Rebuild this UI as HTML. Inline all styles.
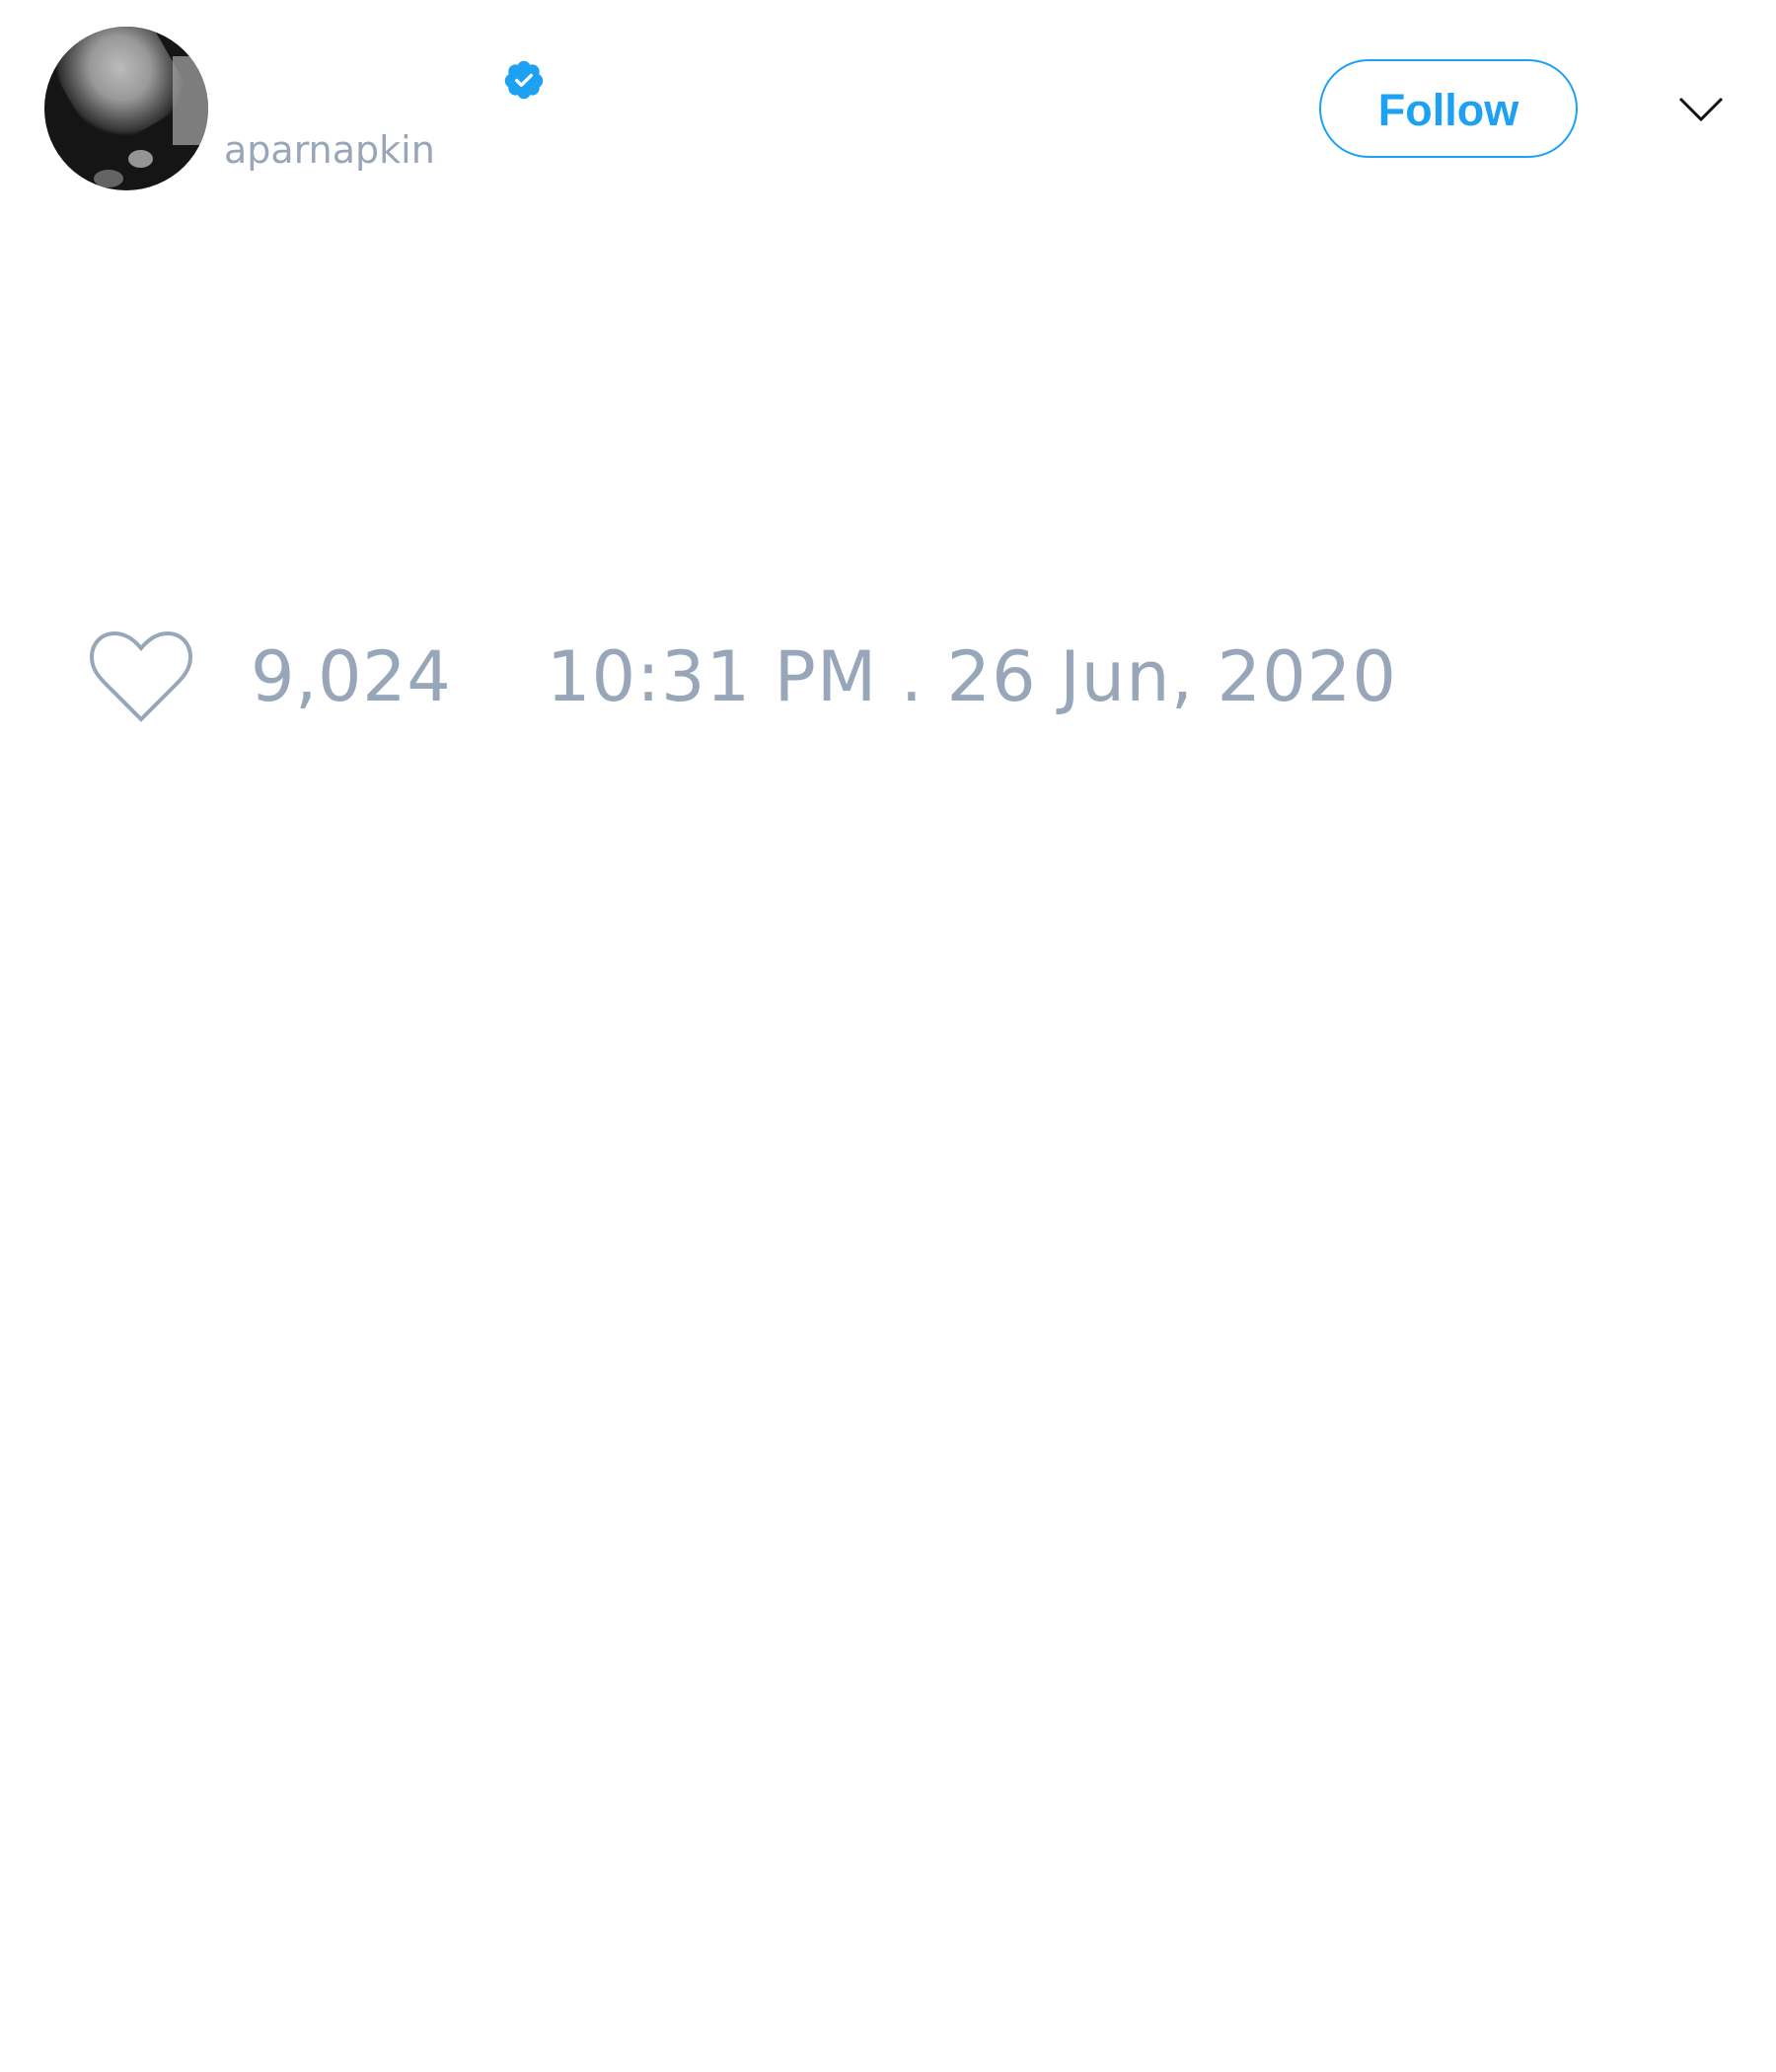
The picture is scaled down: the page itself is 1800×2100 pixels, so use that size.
<!DOCTYPE html>
<html><head><style>
html,body{margin:0;padding:0;background:#fff;width:1800px;height:2100px;overflow:hidden;position:relative;font-family:"DejaVu Sans","Liberation Sans",sans-serif}
.abs{position:absolute;white-space:nowrap}
</style></head><body>
<div class="abs" style="left:45px;top:27px;width:166px;height:166px;border-radius:50%;overflow:hidden;background:#151515">
 <div style="position:absolute;left:20px;top:-10px;width:110px;height:120px;background:radial-gradient(ellipse at 55% 45%,#bbb 0,#999 35%,#333 70%,transparent 75%);transform:rotate(-30deg)"></div>
 <div style="position:absolute;left:130px;top:30px;width:40px;height:90px;background:#aaa;opacity:.7"></div>
 <div style="position:absolute;left:85px;top:125px;width:25px;height:18px;background:#ccc;border-radius:50%;opacity:.7"></div>
 <div style="position:absolute;left:50px;top:145px;width:30px;height:18px;background:#999;border-radius:50%;opacity:.6"></div>
</div>
<div class="abs" style="left:227px;top:127px;font-size:38px;line-height:50px;color:#98A6BA">aparnapkin</div>
<svg class="abs" style="left:509px;top:59px" width="44" height="44" viewBox="0 0 24 24"><path fill="#1DA1F2" d="M22.5 12.5c0-1.58-.875-2.950-2.148-3.600.154-.435.238-.905.238-1.400 0-2.210-1.710-3.998-3.818-3.998-.470 0-.920.084-1.336.250C14.818 2.415 13.510 1.500 12 1.500s-2.816.917-3.437 2.250c-.415-.165-.866-.250-1.336-.250-2.110 0-3.818 1.790-3.818 4 0 .494.083.964.237 1.400-1.272.650-2.147 2.018-2.147 3.600 0 1.495.782 2.798 1.942 3.486-.020.170-.032.340-.032.514 0 2.210 1.708 4 3.818 4 .470 0 .920-.086 1.335-.250.620 1.334 1.926 2.250 3.437 2.250 1.512 0 2.818-.916 3.437-2.250.415.163.865.248 1.336.248 2.110 0 3.818-1.790 3.818-4 0-.174-.012-.344-.033-.513 1.158-.687 1.943-1.990 1.943-3.484z"/><path d="M8 12.3l2.6 2.6L16 9.5" fill="none" stroke="#fff" stroke-width="1.8" stroke-linecap="round" stroke-linejoin="round"/></svg>
<div class="abs" style="left:1337px;top:60px;width:258px;height:96px;border:2.5px solid #1DA1F2;border-radius:50px;color:#1DA1F2;font-family:'Liberation Sans',sans-serif;font-weight:bold;font-size:45px;line-height:100px;text-align:center">Follow</div>
<svg class="abs" style="left:1700px;top:96px" width="48" height="30"><path d="M3 4 L24 25 L45 4" fill="none" stroke="#111" stroke-width="3"/></svg>
<svg class="abs" style="left:90px;top:638px" width="106" height="95" viewBox="0 0 106 95"><path d="M53 19 C44 8 35 4 26 4 C13 4 3 14 3 28 C3 40 10 48 18 56 L53 91 L88 56 C96 48 103 40 103 28 C103 14 93 4 80 4 C71 4 62 8 53 19 Z" fill="none" stroke="#98A6BA" stroke-width="4" stroke-linejoin="miter"/></svg>
<div class="abs" style="left:254px;top:646px;font-size:70px;line-height:80px;color:#98A6BA;letter-spacing:0.6px">9,024</div>
<div class="abs" style="left:554px;top:646px;font-size:70px;line-height:80px;color:#98A6BA;letter-spacing:1.1px">10:31 PM . 26 Jun, 2020</div>
</body></html>
